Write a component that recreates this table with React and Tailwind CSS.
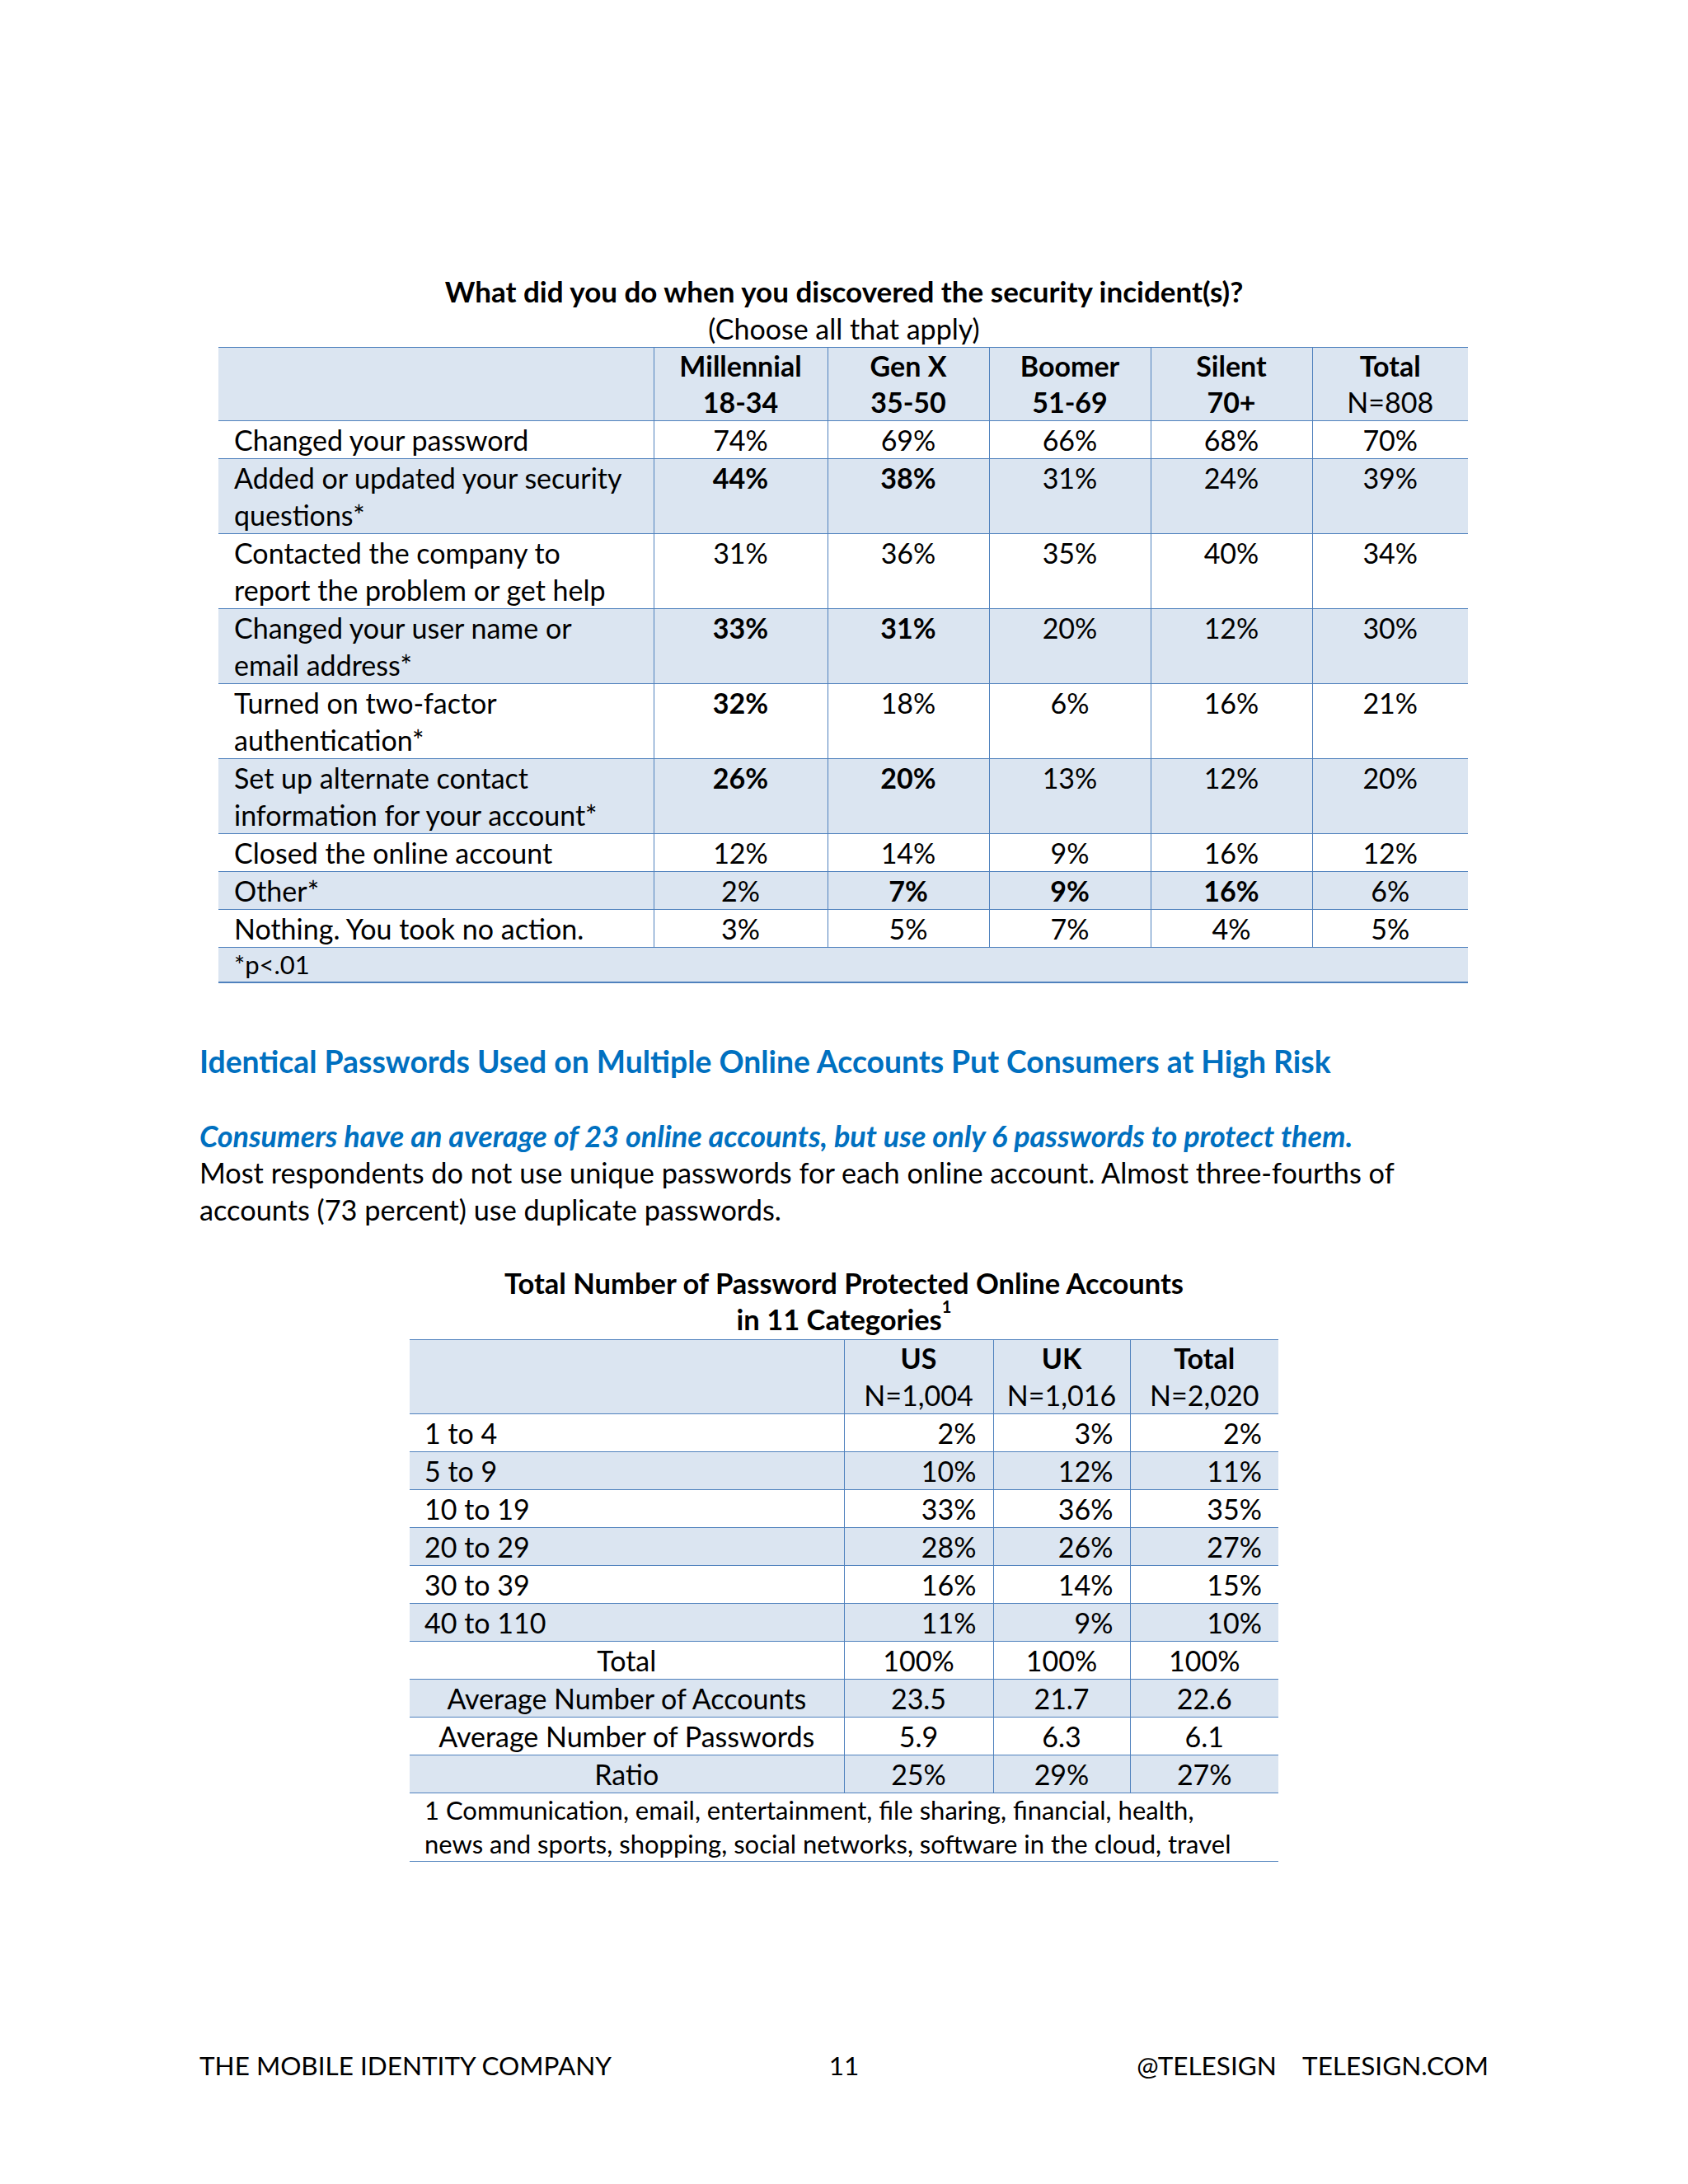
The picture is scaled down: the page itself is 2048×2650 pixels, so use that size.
import React from "react";

const rows1 = [
  { label: ["Changed your password"], vals: ["74%", "69%", "66%", "68%", "70%"], bold: [], shade: false },
  { label: ["Added or updated your security", "questions*"], vals: ["44%", "38%", "31%", "24%", "39%"], bold: [0, 1], shade: true },
  { label: ["Contacted the company to", "report the problem or get help"], vals: ["31%", "36%", "35%", "40%", "34%"], bold: [], shade: false },
  { label: ["Changed your user name or", "email address*"], vals: ["33%", "31%", "20%", "12%", "30%"], bold: [0, 1], shade: true },
  { label: ["Turned on two-factor", "authentication*"], vals: ["32%", "18%", "6%", "16%", "21%"], bold: [0], shade: false },
  { label: ["Set up alternate contact", "information for your account*"], vals: ["26%", "20%", "13%", "12%", "20%"], bold: [0, 1], shade: true },
  { label: ["Closed the online account"], vals: ["12%", "14%", "9%", "16%", "12%"], bold: [], shade: false },
  { label: ["Other*"], vals: ["2%", "7%", "9%", "16%", "6%"], bold: [1, 2, 3], shade: true },
  { label: ["Nothing. You took no action."], vals: ["3%", "5%", "7%", "4%", "5%"], bold: [], shade: false },
];

const heads1 = [
  ["Millennial", "18-34", true],
  ["Gen X", "35-50", true],
  ["Boomer", "51-69", true],
  ["Silent", "70+", true],
  ["Total", "N=808", false],
];

const rows2 = [
  { label: "1 to 4", vals: ["2%", "3%", "2%"], shade: false, center: false },
  { label: "5 to 9", vals: ["10%", "12%", "11%"], shade: true, center: false },
  { label: "10 to 19", vals: ["33%", "36%", "35%"], shade: false, center: false },
  { label: "20 to 29", vals: ["28%", "26%", "27%"], shade: true, center: false },
  { label: "30 to 39", vals: ["16%", "14%", "15%"], shade: false, center: false },
  { label: "40 to 110", vals: ["11%", "9%", "10%"], shade: true, center: false },
  { label: "Total", vals: ["100%", "100%", "100%"], shade: false, center: true },
  { label: "Average Number of Accounts", vals: ["23.5", "21.7", "22.6"], shade: true, center: true },
  { label: "Average Number of Passwords", vals: ["5.9", "6.3", "6.1"], shade: false, center: true },
  { label: "Ratio", vals: ["25%", "29%", "27%"], shade: true, center: true },
];

export default function App() {
  return (
    <div className="w-[2048px] h-[2650px] bg-white text-black font-['Lato',sans-serif] text-[34px] leading-[45px] pt-[331px] flex flex-col">
      {/* Table 1 title */}
      <div className="text-center">
        <div className="font-bold text-[35px]">What did you do when you discovered the security incident(s)?</div>
        <div>(Choose all that apply)</div>
      </div>

      {/* Table 1 */}
      <table className="ml-[265px] w-[1516px] table-fixed border-collapse">
        <colgroup>
          <col className="w-[528px]" />
          <col className="w-[211px]" />
          <col className="w-[196px]" />
          <col className="w-[196px]" />
          <col className="w-[196px]" />
          <col className="w-[189px]" />
        </colgroup>
        <thead>
          <tr className="bg-[#dbe5f1] border-t-[1.5px] border-[#4f81bd]">
            <th className="p-0"></th>
            {heads1.map(([a, b, boldB], i) => (
              <th key={i} className="p-0 border-l border-[#4f81bd] text-center align-top leading-[44px]">
                <div className="font-bold">{a}</div>
                <div className={boldB ? "font-bold" : "font-normal"}>{b}</div>
              </th>
            ))}
          </tr>
        </thead>
        <tbody>
          {rows1.map((r, ri) => (
            <tr key={ri} className={`${r.shade ? "bg-[#dbe5f1]" : "bg-white"} border-t border-[#4f81bd]`}>
              <td className="p-0 pl-[19px] align-top">
                {r.label.map((l, li) => (
                  <div key={li}>{l}</div>
                ))}
              </td>
              {r.vals.map((v, vi) => (
                <td key={vi} className={`p-0 border-l border-[#4f81bd] text-center align-top ${r.bold.includes(vi) ? "font-bold" : ""}`}>
                  {v}
                </td>
              ))}
            </tr>
          ))}
          <tr className="bg-[#dbe5f1] border-t border-b-2 border-[#4f81bd]">
            <td colSpan={6} className="p-0 pl-[19px] text-[31px] leading-[41px]">*p&lt;.01</td>
          </tr>
        </tbody>
      </table>

      {/* Section heading and text */}
      <div className="pl-[242px] pr-[242px] mt-[72px]">
        <div className="text-[37.3px] leading-[46px] font-bold text-[#0070c0]">
          Identical Passwords Used on Multiple Online Accounts Put Consumers at High Risk
        </div>
        <div className="mt-[45px] text-[36px] font-bold italic text-[#0070c0] leading-[45px]">
          Consumers have an average of 23 online accounts, but use only 6 passwords to protect them.
        </div>
        <div className="leading-[44.5px] text-[34.3px]">
          <div>Most respondents do not use unique passwords for each online account. Almost three-fourths of</div>
          <div>accounts (73 percent) use duplicate passwords.</div>
        </div>
      </div>

      {/* Table 2 title */}
      <div className="text-center font-bold text-[34.5px] mt-[45px] leading-[44px]">
        <div>Total Number of Password Protected Online Accounts</div>
        <div>
          in 11 Categories<sup className="text-[20px] font-bold relative top-[-4px] leading-none align-top">1</sup>
        </div>
      </div>

      {/* Table 2 */}
      <table className="ml-[497px] w-[1054px] table-fixed border-collapse mt-[2px]">
        <colgroup>
          <col className="w-[527px]" />
          <col className="w-[181px]" />
          <col className="w-[166px]" />
          <col className="w-[180px]" />
        </colgroup>
        <thead>
          <tr className="bg-[#dbe5f1] border-t-[1.5px] border-[#4f81bd]">
            <th className="p-0"></th>
            {[
              ["US", "N=1,004"],
              ["UK", "N=1,016"],
              ["Total", "N=2,020"],
            ].map(([a, b], i) => (
              <th key={i} className="p-0 border-l border-[#4f81bd] text-center align-top leading-[44.5px]">
                <div className="font-bold">{a}</div>
                <div className="font-normal">{b}</div>
              </th>
            ))}
          </tr>
        </thead>
        <tbody>
          {rows2.map((r, ri) => (
            <tr key={ri} className={`${r.shade ? "bg-[#dbe5f1]" : "bg-white"} border-t border-[#4f81bd]`}>
              <td className={`p-0 align-top ${r.center ? "text-center" : "pl-[18px]"}`}>{r.label}</td>
              {r.vals.map((v, vi) => (
                <td
                  key={vi}
                  className={`p-0 border-l border-[#4f81bd] align-top ${r.center ? "text-center" : "text-right pr-[20px]"}`}
                >
                  {v}
                </td>
              ))}
            </tr>
          ))}
          <tr className="bg-white border-t border-b border-[#4f81bd]">
            <td colSpan={4} className="p-0 pl-[18px] text-[31px] leading-[41px]">
              <div>1 Communication, email, entertainment, file sharing, financial, health,</div>
              <div>news and sports, shopping, social networks, software in the cloud, travel</div>
            </td>
          </tr>
        </tbody>
      </table>

      {/* Footer */}
      <div className="mt-[225px] mx-[242px] grid grid-cols-3 text-[31.5px] leading-[44px]">
        <div className="text-left">THE MOBILE IDENTITY COMPANY</div>
        <div className="text-center">11</div>
        <div className="text-right whitespace-pre">@TELESIGN    TELESIGN.COM</div>
      </div>
    </div>
  );
}
